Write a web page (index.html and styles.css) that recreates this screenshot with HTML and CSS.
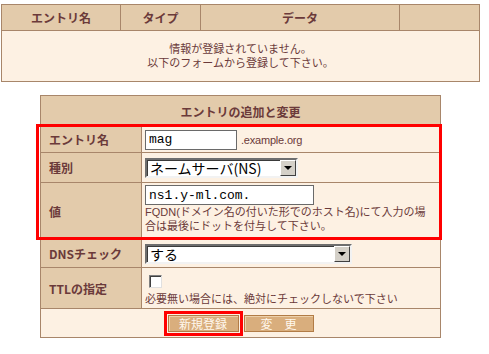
FILE: index.html
```html
<!DOCTYPE html>
<html lang="ja">
<head>
<meta charset="utf-8">
<title>エントリの追加と変更</title>
<link rel="stylesheet" href="styles.css">
</head>
<body>
<div class="page">
  <div class="list">
    <div class="lh first">エントリ名</div>
    <div class="lh">タイプ</div>
    <div class="lh">データ</div>
    <div class="lh"></div>
    <div class="empty">情報が登録されていません。<br>以下のフォームから登録して下さい。</div>
  </div>

  <div class="form">
    <div class="fh">エントリの追加と変更</div>

    <div class="lbl">エントリ名</div>
    <div class="val mid">
      <input class="tx w-name" type="text" value="mag">
      <span class="domain">.example.org</span>
    </div>

    <div class="lbl">種別</div>
    <div class="val mid">
      <div class="sel w-type"><span class="sel-t">ネームサーバ(NS)</span><span class="sel-b"><i class="tri"></i></span></div>
    </div>

    <div class="lbl">値</div>
    <div class="val top">
      <input class="tx w-val" type="text" value="ns1.y-ml.com.">
      <div class="help">FQDN(ドメイン名の付いた形でのホスト名)にて入力の場<br>合は最後にドットを付与して下さい。</div>
    </div>

    <div class="lbl">DNSチェック</div>
    <div class="val mid">
      <div class="sel w-dns"><span class="sel-t">する</span><span class="sel-b"><i class="tri"></i></span></div>
    </div>

    <div class="lbl">TTLの指定</div>
    <div class="val ttl">
      <span class="cb"></span>
      <div class="help">必要無い場合には、絶対にチェックしないで下さい</div>
    </div>

    <div class="btns">
      <button class="btn b-new" type="button">新規登録</button>
      <button class="btn b-chg" type="button">変　更</button>
    </div>

    <div class="hl"></div>
  </div>
</div>
</body>
</html>
```

FILE: styles.css
```css
body {
  margin: 0;
  background: #ffffff;
  color: #6b3a3a;
  font-family: "Noto Sans CJK JP", "Noto Sans", sans-serif;
}

.page {
  width: 479px;
  margin-left: 1px;
  padding-top: 4px;
  display: flex;
  flex-direction: column;
  align-items: center;
}

/* entry list */
.list {
  width: 479px;
  box-sizing: border-box;
  border: 1px solid #a8866a;
  display: grid;
  grid-template-columns: 118px 80px 199px 80px;
  grid-template-rows: 25px 51px;
}

.lh {
  background: #e3cbab;
  border-left: 1px solid #a8866a;
  font-size: 12px;
  font-weight: bold;
  display: flex;
  align-items: center;
  justify-content: center;
}

.lh.first {
  border-left: 0;
}

.empty {
  grid-column: 1 / -1;
  border-top: 1px solid #a8866a;
  background: #fdf1e3;
  font-family: "Liberation Sans", "Noto Sans CJK JP", sans-serif;
  font-size: 11px;
  line-height: 14px;
  text-align: center;
  display: flex;
  align-items: center;
  justify-content: center;
}

/* form */
.form {
  position: relative;
  margin-top: 13px;
  width: 401px;
  box-sizing: border-box;
  border: 1px solid #a8866a;
  background: #fdf1e3;
  display: grid;
  grid-template-columns: 100px 299px;
  grid-template-rows: 30px 26px 30px 57px 28px 41px 29px;
}

.fh {
  grid-column: 1 / -1;
  background: #e3cbab;
  font-size: 12px;
  font-weight: bold;
  display: flex;
  align-items: center;
  justify-content: center;
}

.lbl {
  background: #e3cbab;
  border-top: 1px solid #a8866a;
  padding-left: 8px;
  font-size: 12px;
  font-weight: bold;
  display: flex;
  align-items: center;
}

.val {
  border-top: 1px solid #a8866a;
  border-left: 1px solid #a8866a;
  padding-left: 3px;
}

.val.mid {
  display: flex;
  align-items: center;
}

.val.top {
  padding-top: 2px;
}

.val.ttl {
  padding-top: 7px;
}

.tx {
  display: block;
  box-sizing: border-box;
  height: 20px;
  margin: 0;
  padding: 0 0 0 3px;
  border: 1px solid #6a6a6a;
  background: #ffffff;
  color: #000000;
  font-family: "Liberation Mono", "DejaVu Sans Mono", monospace;
  font-size: 13px;
  outline: none;
}

.w-name {
  width: 92px;
}

.w-val {
  width: 169px;
}

.domain {
  margin-left: 4px;
  font-family: "Liberation Sans", Arial, sans-serif;
  font-size: 11px;
  letter-spacing: -0.2px;
}

.sel {
  box-sizing: border-box;
  height: 20px;
  border: 2px solid;
  border-color: #6e6e6e #f2f2f2 #f2f2f2 #6e6e6e;
  box-shadow: inset 1px 1px 0 #3a3a3a;
  background: #ffffff;
  display: flex;
  align-items: center;
}

.w-type {
  width: 153px;
}

.w-dns {
  width: 207px;
}

.sel-t {
  flex: 1;
  padding-left: 3px;
  color: #000000;
  font-size: 14px;
  line-height: 16px;
  white-space: nowrap;
}

.sel-b {
  width: 16px;
  height: 16px;
  box-sizing: border-box;
  background: #d4d0c8;
  border: 1px solid;
  border-color: #ffffff #404040 #404040 #ffffff;
  display: flex;
  align-items: center;
  justify-content: center;
}

.tri {
  width: 0;
  height: 0;
  border-left: 4px solid transparent;
  border-right: 4px solid transparent;
  border-top: 4px solid #000000;
}

.help {
  font-family: "Liberation Sans", "Noto Sans CJK JP", sans-serif;
  font-size: 11px;
  line-height: 14px;
  white-space: nowrap;
}

.cb {
  display: block;
  width: 13px;
  height: 13px;
  box-sizing: border-box;
  margin: 0 0 4px 4px;
  background: #ffffff;
  border: 1px solid;
  border-color: #808080 #e0e0e0 #e0e0e0 #808080;
  box-shadow: inset 1px 1px 0 #404040;
}

.btns {
  grid-column: 1 / -1;
  border-top: 1px solid #a8866a;
  display: flex;
  align-items: center;
  justify-content: center;
  gap: 5px;
}

.btn {
  box-sizing: border-box;
  height: 17px;
  margin: 0;
  padding: 0;
  background: #d9ae7d;
  border: 1px solid #b27c46;
  box-shadow: inset 1px 1px 0 #ecd0aa;
  color: #fff8ee;
  font-family: "Noto Sans CJK JP", sans-serif;
  font-size: 12px;
  line-height: 15px;
}

.b-new {
  width: 71px;
  outline: 3px solid #ff0000;
  outline-offset: 1px;
}

.b-chg {
  width: 70px;
}

/* highlight frame over the first three rows */
.hl {
  position: absolute;
  left: -5px;
  top: 28px;
  width: 406px;
  height: 116px;
  box-sizing: border-box;
  border: 3px solid #ff0000;
  pointer-events: none;
}
```
